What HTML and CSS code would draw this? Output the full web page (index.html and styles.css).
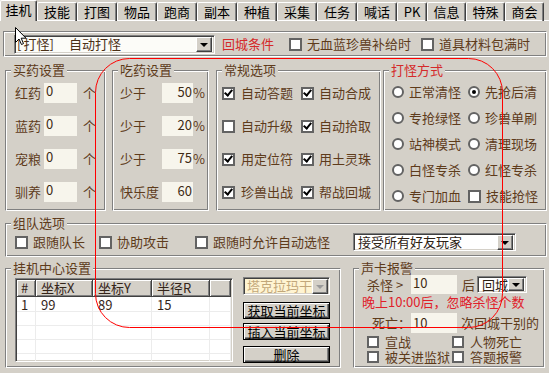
FILE: index.html
```html
<!DOCTYPE html>
<html lang="zh">
<head>
<meta charset="utf-8">
<title>挂机</title>
<link rel="stylesheet" href="styles.css">
</head>
<body>
<div class="win">
  <div class="tabs">
    <div class="tab sel">挂机</div>
    <div class="tab">技能</div>
    <div class="tab">打图</div>
    <div class="tab">物品</div>
    <div class="tab">跑商</div>
    <div class="tab">副本</div>
    <div class="tab">种植</div>
    <div class="tab">采集</div>
    <div class="tab">任务</div>
    <div class="tab">喊话</div>
    <div class="tab pk">PK</div>
    <div class="tab n39">信息</div>
    <div class="tab n39">特殊</div>
    <div class="tab n39">商会</div>
    <div class="tabfill"></div>
  </div>

  <div class="panel">
    <div class="topbox etched">
      <div class="combo c-mode"><span class="ctext"><span class="hw">[</span>打怪<span class="hw">]</span><span class="gap13"></span>自动打怪</span><span class="dd"><i class="tri"></i></span></div>
      <span class="redlbl">回城条件</span>
      <div class="chk t1"><span class="cb"></span>无血蓝珍兽补给时</div>
      <div class="chk t2"><span class="cb"></span>道具材料包满时</div>
    </div>

    <div class="row1">
      <div class="grp etched g-buy">
        <div class="lg">买药设置</div>
        <div class="form buyform">
          <span>红药</span><span class="inp">0</span><span>个</span>
          <span>蓝药</span><span class="inp">0</span><span>个</span>
          <span>宠粮</span><span class="inp">0</span><span>个</span>
          <span>驯养</span><span class="inp">0</span><span>个</span>
        </div>
      </div>

      <div class="grp etched g-eat">
        <div class="lg">吃药设置</div>
        <div class="form eatform">
          <span>少于</span><span class="inp r">50</span><span class="pct">%</span>
          <span>少于</span><span class="inp r">20</span><span class="pct">%</span>
          <span>少于</span><span class="inp r">75</span><span class="pct">%</span>
          <span>快乐度</span><span class="inp r">60</span><span></span>
        </div>
      </div>

      <div class="grp etched g-gen">
        <div class="lg">常规选项</div>
        <div class="form genform">
          <div class="chk"><span class="cb on"></span>自动答题</div>
          <div class="chk"><span class="cb on"></span>自动合成</div>
          <div class="chk"><span class="cb"></span>自动升级</div>
          <div class="chk"><span class="cb on"></span>自动拾取</div>
          <div class="chk"><span class="cb on"></span>用定位符</div>
          <div class="chk"><span class="cb on"></span>用土灵珠</div>
          <div class="chk"><span class="cb on"></span>珍兽出战</div>
          <div class="chk"><span class="cb on"></span>帮战回城</div>
        </div>
      </div>

      <div class="grp etched g-atk">
        <div class="lg red">打怪方式</div>
        <div class="form atkform">
          <div class="chk"><span class="rd"></span>正常清怪</div>
          <div class="chk"><span class="rd on"></span>先抢后清</div>
          <div class="chk"><span class="rd"></span>专抢绿怪</div>
          <div class="chk"><span class="rd"></span>珍兽单刷</div>
          <div class="chk"><span class="rd"></span>站神模式</div>
          <div class="chk"><span class="rd"></span>清理现场</div>
          <div class="chk"><span class="rd"></span>白怪专杀</div>
          <div class="chk"><span class="rd"></span>红怪专杀</div>
          <div class="chk"><span class="rd"></span>专门加血</div>
          <div class="chk"><span class="cb"></span>技能抢怪</div>
        </div>
      </div>
    </div>

    <div class="grp etched g-team">
      <div class="lg">组队选项</div>
      <div class="teamrow">
        <div class="chk"><span class="cb"></span>跟随队长</div>
        <div class="chk m-help"><span class="cb"></span>协助攻击</div>
        <div class="chk m-follow"><span class="cb"></span>跟随时允许自动选怪</div>
        <div class="combo c-friend"><span class="ctext dark">接受所有好友玩家</span><span class="dd"><i class="tri"></i></span></div>
      </div>
    </div>

    <div class="row3">
      <div class="grp etched g-center">
        <div class="lg">挂机中心设置</div>
        <div class="centerrow">
          <div class="tbl">
            <div class="thead">
              <div class="th w1">#</div>
              <div class="th w2">坐标X</div>
              <div class="th w3">坐标Y</div>
              <div class="th w4">半径R</div>
              <div class="th w5"></div>
            </div>
            <div class="tr first">
              <div class="td w1">1</div><div class="td w2">99</div><div class="td w3">89</div><div class="td w4">15</div><div class="td w5"></div>
            </div>
            <div class="tr"><div class="td w1"></div><div class="td w2"></div><div class="td w3"></div><div class="td w4"></div><div class="td w5"></div></div>
            <div class="tr"><div class="td w1"></div><div class="td w2"></div><div class="td w3"></div><div class="td w4"></div><div class="td w5"></div></div>
            <div class="tr"><div class="td w1"></div><div class="td w2"></div><div class="td w3"></div><div class="td w4"></div><div class="td w5"></div></div>
            <div class="tr"><div class="td w1"></div><div class="td w2"></div><div class="td w3"></div><div class="td w4"></div><div class="td w5"></div></div>
          </div>
          <div class="sidecol">
            <div class="combo c-map"><span class="ctext dis">塔克拉玛干</span><span class="dd"><i class="tri gray"></i></span></div>
            <div class="btn b1">获取当前坐标</div>
            <div class="btn b2">插入当前坐标</div>
            <div class="btn b3">删除</div>
          </div>
        </div>
      </div>

      <div class="grp etched g-snd">
        <div class="lg">声卡报警</div>
        <div class="sndrow ra">
          <span class="slbl">杀怪 &gt;</span><span class="inp w46">10</span><span class="after">后</span>
          <div class="combo c-back"><span class="ctext dark">回城</span><span class="dd"><i class="tri"></i></span></div>
        </div>
        <div class="redline">晚上10:00后，忽略杀怪个数</div>
        <div class="sndrow rc">
          <span class="slbl dlbl">死亡：</span><span class="inp w46 h20">10</span><span class="after2">次回城干别的</span>
        </div>
        <div class="alarms">
          <div class="chk"><span class="cb"></span>宣战</div>
          <div class="chk"><span class="cb"></span>人物死亡</div>
          <div class="chk"><span class="cb"></span>被关进监狱</div>
          <div class="chk"><span class="cb"></span>答题报警</div>
        </div>
      </div>
    </div>
  </div>

  <svg class="overlay" width="549" height="373" viewBox="0 0 549 373">
    <rect x="95.5" y="58.5" width="407" height="269" rx="34" ry="34" fill="none" stroke="#ff0000" stroke-width="1"/>
  </svg>
  <svg class="cursor" width="13" height="19" viewBox="0 0 13 19">
    <polygon points="0.5,0.5 0.5,15.5 4,12 6.5,17.5 8.5,16.6 6.2,11.2 11,11.2" fill="#fff" stroke="#000" stroke-width="1" stroke-linejoin="round"/>
  </svg>
</div>
</body>
</html>
```

FILE: styles.css
```css
* { box-sizing: border-box; }
html, body { margin: 0; padding: 0; }
body {
  width: 549px;
  height: 373px;
  overflow: hidden;
  background: #d4d0c8;
  font-family: "Noto Sans CJK SC", "Noto Sans", sans-serif;
  font-size: 13px;
  line-height: 14px;
  color: #5e3b1b;
}
.win { position: relative; width: 549px; height: 373px; }

/* tabs */
.tabs { display: flex; align-items: flex-end; height: 21px; }
.tab {
  width: 40px;
  height: 19px;
  border-top: 1px solid #fff;
  border-left: 1px solid #fff;
  border-right: 1px solid #404040;
  border-radius: 2px 2px 0 0;
  box-shadow: inset -1px 0 #808080, inset 0 -1px #fff;
  text-align: center;
  line-height: 17px;
  color: #000;
}
.tab.sel { width: 37px; height: 21px; line-height: 18px; box-shadow: inset -1px 0 #808080; }
.tab.pk { width: 30px; }
.tab.n39 { width: 39px; }
.tabfill { flex: 1; height: 1px; background: #fff; }

.etched {
  border: 1px solid;
  border-color: #808080 #fff #fff #808080;
  box-shadow: inset 1px 1px #fff, inset -1px -1px #808080;
}

/* top box */
.topbox {
  margin: 10px 0 0 3px;
  width: 544px;
  height: 26px;
  display: flex;
  align-items: center;
}
.combo {
  display: flex;
  align-items: center;
  border: 1px solid;
  border-color: #808080 #fff #fff #808080;
  box-shadow: inset 1px 1px #404040, inset -1px -1px #d4d0c8;
  background: #fcfcf8;
  overflow: hidden;
}
.ctext { padding-left: 2px; white-space: nowrap; color: #4a3016; }
.ctext.dark { padding-left: 4px; color: #2e2214; }
.ctext.dis { color: #c2a77a; padding-left: 3px; }
.hw { display: inline-block; width: 6.5px; }
.gap13 { display: inline-block; width: 13px; }
.dd {
  margin-left: auto;
  margin-right: 2px;
  width: 16px;
  height: 15px;
  flex: none;
  background: #d4d0c8;
  border: 1px solid;
  border-color: #fff #404040 #404040 #fff;
  box-shadow: inset -1px -1px #808080;
  display: flex;
  align-items: center;
  justify-content: center;
}
.tri {
  width: 0; height: 0;
  border-left: 4px solid transparent;
  border-right: 4px solid transparent;
  border-top: 4px solid #000;
  margin-top: 1px;
}
.tri.gray { border-top-color: #9a9a9a; }
.c-mode { margin-left: 10px; width: 201px; height: 19px; }
.redlbl { margin-left: 7px; color: #d42a2a; }
.chk { display: flex; align-items: center; white-space: nowrap; }
.t1 { margin-left: 15px; }
.t2 { margin-left: 10px; }

.cb {
  position: relative;
  flex: none;
  width: 13px;
  height: 13px;
  margin-right: 5px;
  background: #fff;
  border: 2px solid #636363;
}
.cb.on::after {
  content: "";
  position: absolute;
  left: 2px;
  top: -1px;
  width: 3px;
  height: 6px;
  border: solid #000;
  border-width: 0 2px 2px 0;
  transform: rotate(40deg);
}
.rd {
  position: relative;
  flex: none;
  width: 12px;
  height: 12px;
  margin-right: 5px;
  border-radius: 50%;
  background: #fff;
  border: 2px solid #636363;
}
.rd.on::after {
  content: "";
  position: absolute;
  left: 2px;
  top: 2px;
  width: 4px;
  height: 4px;
  border-radius: 50%;
  background: #000;
}

/* group boxes */
.grp { flex: none; }
.lg {
  display: table;
  margin: -8px 0 0 5px;
  padding: 0 2px;
  height: 14px;
  line-height: 14px;
  background: #d4d0c8;
}
.lg.red { color: #d42a2a; }

.row1 { display: flex; margin-top: 13px; height: 141px; }
.g-buy { margin-left: 5px; width: 101px; }
.g-eat { margin-left: 6px; width: 97px; }
.g-gen { margin-left: 7px; width: 165px; }
.g-atk { margin-left: 2px; width: 164px; }

.form { display: grid; align-items: center; }
.buyform {
  margin-top: 6px;
  padding-left: 9px;
  grid-template-columns: 26px 33px auto;
  grid-auto-rows: 20px;
  column-gap: 3px;
  row-gap: 13px;
}
.buyform > span:nth-child(3n) { margin-left: 3px; }
.inp {
  height: 20px;
  background: #f7f5ec;
  color: #3e2a14;
  padding: 1px 0 0 2px;
  line-height: 14px;
}
.inp.r { text-align: right; padding: 2px 1px 0 0; }
.eatform {
  margin-top: 6px;
  padding-left: 7px;
  grid-template-columns: 42px 31px auto;
  grid-auto-rows: 20px;
  row-gap: 13px;
}
.pct { padding-left: 0; }
.genform {
  margin-top: 6px;
  padding-left: 5px;
  grid-template-columns: 79px auto;
  grid-auto-rows: 20px;
  row-gap: 13px;
}
.genform .chk:nth-child(odd) .cb { margin-right: 6px; }
.atkform {
  margin-top: 5px;
  padding-left: 8px;
  grid-template-columns: 76px auto;
  grid-auto-rows: 20px;
  row-gap: 6px;
}

/* team */
.g-team { margin: 12px 0 0 5px; width: 542px; height: 34px; }
.teamrow { display: flex; align-items: center; height: 20px; margin-top: 2px; padding-left: 9px; }
.m-help { margin-left: 14px; }
.m-follow { margin-left: 26px; }
.c-friend { margin-left: 23px; width: 163px; height: 18px; background: #fff; }

/* bottom row */
.row3 { display: flex; margin-top: 11px; height: 100px; }
.g-center { margin-left: 5px; width: 336px; }
.g-snd { margin-left: 12px; width: 192px; }
.centerrow { display: flex; align-items: flex-start; margin-top: 3px; padding-left: 9px; }
.tbl {
  width: 218px;
  height: 84px;
  padding: 1px;
  background: #fff;
  border: 1px solid;
  border-color: #808080 #fff #fff #808080;
  box-shadow: inset 1px 1px #404040, inset -1px -1px #d4d0c8;
  overflow: hidden;
  color: #35251a;
}
.thead { display: flex; height: 17px; }
.th {
  height: 17px;
  background: #d4d0c8;
  border-right: 1px solid #404040;
  border-bottom: 1px solid #404040;
  box-shadow: inset 1px 1px #fff, inset -1px -1px #808080;
  padding: 1px 0 0 5px;
  line-height: 14px;
  white-space: nowrap;
}
.tr { display: flex; height: 14px; }
.tr.first { height: 15px; }
.td {
  border-right: 1px solid #ececec;
  border-bottom: 1px solid #ececec;
  padding: 1px 0 0 5px;
  line-height: 13px;
}
.w1 { width: 19px; padding-left: 4px; }
.w2 { width: 57px; }
.w3 { width: 59px; }
.w4 { width: 58px; }
.w5 { width: 21px; }

.sidecol { display: flex; flex-direction: column; margin: -1px 0 0 10px; width: 87px; }
.c-map { height: 18px; background: #fff4d2; }
.btn {
  height: 17px;
  border: 1px solid #000;
  background: #d4d0c8;
  box-shadow: inset 1px 1px #fff, inset -1px -1px #404040, inset -2px -2px #808080;
  text-align: center;
  line-height: 15px;
  color: #000;
}
.b1 { margin-top: 7px; }
.b2 { margin-top: 4px; }
.b3 { margin-top: 6px; }

/* sound alarm */
.sndrow { display: flex; align-items: center; padding-left: 13px; }
.ra { height: 19px; }
.rc { height: 20px; margin-top: 4px; }
.slbl { width: 44px; white-space: nowrap; }
.dlbl { padding-left: 5px; }
.inp.w46 { width: 46px; height: 19px; }
.inp.h20 { height: 20px; padding-top: 3px; }
.after { margin-left: 5px; }
.after2 { margin-left: 4px; white-space: nowrap; }
.c-back { margin-left: 2px; width: 50px; height: 17px; background: #fff; }
.c-back .dd { height: 13px; }
.redline { margin: 1px 0 0 8px; height: 14px; color: #e0202a; white-space: nowrap; }
.alarms {
  display: grid;
  grid-template-columns: 85px auto;
  grid-auto-rows: 15px;
  align-items: center;
  margin-top: 1px;
  padding-left: 13px;
}
.alarms .cb { width: 12px; height: 12px; margin-right: 6px; }

/* overlays */
.overlay { position: absolute; left: 0; top: 0; pointer-events: none; }
.cursor { position: absolute; left: 15px; top: 27px; pointer-events: none; }
```
